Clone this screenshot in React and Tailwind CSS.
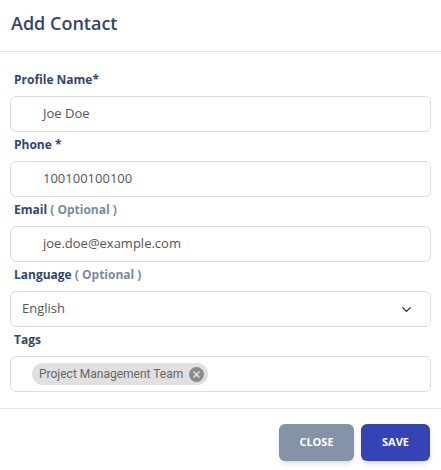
import { ChevronDown } from 'lucide-react'

const labelCls = "h-[18px] mb-[7px] pl-[4px] text-[12px] leading-[18px] font-bold text-[#34466b] font-['Open_Sans',sans-serif]"
const boxCls = "h-[36px] rounded-[6px] border border-[#dcdcdc] bg-white flex items-center"

function Field({ label, optional, value }) {
  return (
    <div className="mb-[4px]">
      <div className={labelCls}>
        {label}
        {optional && <span className="text-[#7b8aa3]"> ( Optional )</span>}
      </div>
      <div className={boxCls + " pl-[32px] text-[13px] text-[#555] font-['Open_Sans',sans-serif]"}>{value}</div>
    </div>
  )
}

export default function App() {
  return (
    <div className="w-[441px] h-[470px] bg-white flex flex-col">
      {/* header */}
      <div className="h-[52px] px-[11px] pb-[4px] flex items-center border-b border-[#e2e2e2]">
        <h2 className="text-[18px] font-semibold text-[#34466b] font-['Open_Sans',sans-serif]">Add Contact</h2>
      </div>

      {/* form */}
      <div className="px-[10px] pt-[19px] pb-[16px] border-b border-[#e2e2e2]">
        <Field label="Profile Name*" value="Joe Doe" />
        <Field label="Phone *" value="100100100100" />
        <Field label="Email" optional value="joe.doe@example.com" />

        <div className="mb-[4px]">
          <div className={labelCls}>
            Language<span className="text-[#7b8aa3]"> ( Optional )</span>
          </div>
          <div className={boxCls + " justify-between pl-[11px] pr-[16px] text-[13px] text-[#555] font-['Open_Sans',sans-serif]"}>
            <span>English</span>
            <ChevronDown size={15} strokeWidth={2.2} className="text-[#333]" />
          </div>
        </div>

        <div>
          <div className={labelCls}>Tags</div>
          <div className={boxCls + " pl-[21px]"}>
            <span className="h-[22px] pl-[7px] pr-[4px] rounded-full bg-[#e0e0e0] flex items-center gap-[6px] text-[12px] text-[#666] font-['Roboto',sans-serif]">
              Project Management Team
              <span className="w-[15px] h-[15px] rounded-full bg-[#8c8c8c] flex items-center justify-center">
                <svg width="7" height="7" viewBox="0 0 7 7">
                  <path d="M1 1L6 6M6 1L1 6" stroke="#e0e0e0" strokeWidth="1.6" strokeLinecap="round" />
                </svg>
              </span>
            </span>
          </div>
        </div>
      </div>

      {/* footer */}
      <div className="flex justify-end gap-[7px] px-[11px] pt-[15px]">
        <button className="w-[75px] h-[37px] rounded-[6px] bg-[#8593a9] text-white text-[11px] font-bold uppercase shadow-md font-['Open_Sans',sans-serif]">Close</button>
        <button className="w-[69px] h-[37px] rounded-[6px] bg-[#3444b4] text-white text-[11px] font-bold uppercase shadow-md font-['Open_Sans',sans-serif]">Save</button>
      </div>
    </div>
  )
}
